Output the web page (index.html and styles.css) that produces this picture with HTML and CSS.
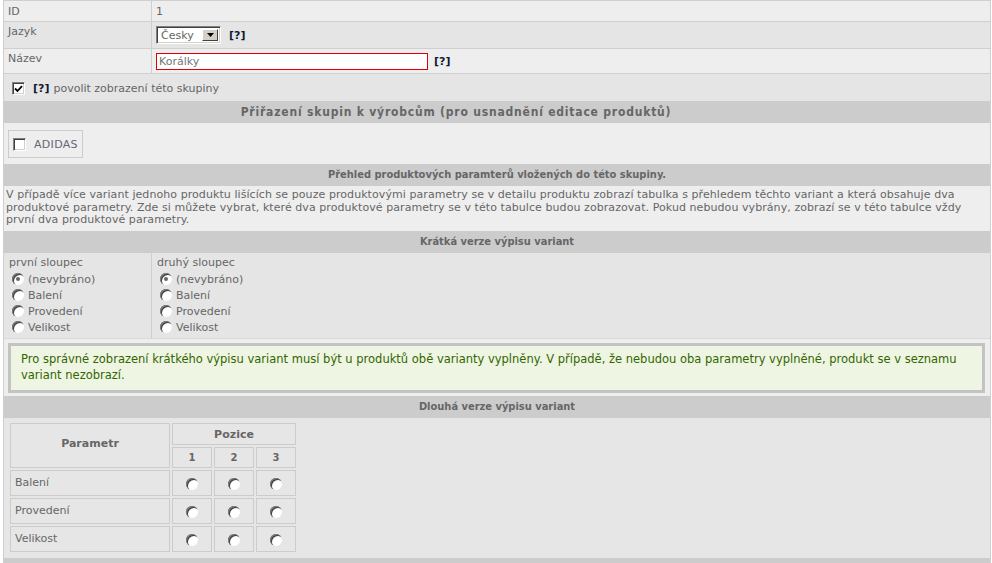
FILE: index.html
```html
<!DOCTYPE html>
<html lang="cs">
<head>
<meta charset="utf-8">
<title>Skupina</title>
<link rel="stylesheet" href="styles.css">
</head>
<body>
<div class="form">
  <div class="row two light r-id">
    <div class="lbl">ID</div>
    <div class="val">1</div>
  </div>
  <div class="row two dark r-sel">
    <div class="lbl">Jazyk</div>
    <div class="val">
      <span class="select"><span class="sel-text">Česky</span><span class="sel-btn"><svg width="7" height="4" viewBox="0 0 7 4"><path d="M0 0h7L3.5 4z" fill="#000"/></svg></span></span>
      <span class="help">[?]</span>
    </div>
  </div>
  <div class="row two light r-inp">
    <div class="lbl">Název</div>
    <div class="val">
      <span class="input">Korálky</span>
      <span class="help">[?]</span>
    </div>
  </div>
  <div class="row dark r-chk">
    <span class="chk"><svg width="9" height="8" viewBox="0 0 9 8"><path d="M1 3.5l2.5 2.5L8 1.2" fill="none" stroke="#000" stroke-width="1.8"/></svg></span>
    <span class="help">[?]</span>
    <span>povolit zobrazení této skupiny</span>
  </div>

  <div class="head head-first">Přiřazení skupin k výrobcům (pro usnadnění editace produktů)</div>
  <div class="row light r-brands">
    <span class="brand"><span class="chk chk-off"></span>ADIDAS</span>
  </div>

  <div class="head">Přehled produktových paramterů vložených do této skupiny.</div>
  <div class="row light r-para">V případě více variant jednoho produktu lišících se pouze produktovými parametry se v detailu produktu zobrazí tabulka s přehledem těchto variant a která obsahuje dva produktové parametry. Zde si můžete vybrat, které dva produktové parametry se v této tabulce budou zobrazovat. Pokud nebudou vybrány, zobrazí se v této tabulce vždy první dva produktové parametry.</div>

  <div class="head">Krátká verze výpisu variant</div>
  <div class="row two dark r-cols">
    <div class="col first">
      <div class="col-title">první sloupec</div>
      <div class="opt"><span class="radio on"></span>(nevybráno)</div>
      <div class="opt"><span class="radio"></span>Balení</div>
      <div class="opt"><span class="radio"></span>Provedení</div>
      <div class="opt"><span class="radio"></span>Velikost</div>
    </div>
    <div class="col">
      <div class="col-title">druhý sloupec</div>
      <div class="opt"><span class="radio on"></span>(nevybráno)</div>
      <div class="opt"><span class="radio"></span>Balení</div>
      <div class="opt"><span class="radio"></span>Provedení</div>
      <div class="opt"><span class="radio"></span>Velikost</div>
    </div>
  </div>
  <div class="row light r-notice">
    <div class="notice">Pro správné zobrazení krátkého výpisu variant musí být u produktů obě varianty vyplněny. V případě, že nebudou oba parametry vyplněné, produkt se v seznamu variant nezobrazí.</div>
  </div>

  <div class="head">Dlouhá verze výpisu variant</div>
  <div class="row mid r-long">
    <table class="pos">
      <tr>
        <th rowspan="2" class="p-name">Parametr</th>
        <th colspan="3" class="p-top">Pozice</th>
      </tr>
      <tr>
        <th class="p-num">1</th><th class="p-num">2</th><th class="p-num">3</th>
      </tr>
      <tr>
        <td class="p-lbl">Balení</td>
        <td class="p-r"><span class="radio"></span></td>
        <td class="p-r"><span class="radio"></span></td>
        <td class="p-r"><span class="radio"></span></td>
      </tr>
      <tr>
        <td class="p-lbl">Provedení</td>
        <td class="p-r"><span class="radio"></span></td>
        <td class="p-r"><span class="radio"></span></td>
        <td class="p-r"><span class="radio"></span></td>
      </tr>
      <tr>
        <td class="p-lbl">Velikost</td>
        <td class="p-r"><span class="radio"></span></td>
        <td class="p-r"><span class="radio"></span></td>
        <td class="p-r"><span class="radio"></span></td>
      </tr>
    </table>
  </div>
  <div class="head">&nbsp;</div>
</div>
</body>
</html>
```

FILE: styles.css
```css
html, body {
  margin: 0;
  padding: 0;
  background: #fff;
}
body {
  font-family: "DejaVu Sans", Verdana, sans-serif;
  font-size: 11px;
  line-height: 13px;
  color: #666;
}
.form {
  margin-left: 3px;
  width: 988px;
  box-sizing: border-box;
  border: 1px solid #cfcfcf;
  border-bottom: 0;
}
.row { box-sizing: border-box; }
.light { background: #eeeeee; }
.dark { background: #e5e5e5; }
.mid { background: #e6e6e6; }

.two {
  display: grid;
  grid-template-columns: 148px 1fr;
}
.lbl {
  border-right: 1px solid #cfcfcf;
  padding: 4px 0 0 4px;
}
.val {
  padding: 4px 0 0 4px;
  display: flex;
  align-items: flex-start;
}

.r-id { height: 21px; border-bottom: 1px solid #cfcfcf; }
.r-id .lbl, .r-id .val { padding-top: 4px; }
.r-sel { height: 27px; border-bottom: 1px solid #cfcfcf; }
.r-sel .lbl { padding-top: 3px; }
.r-inp { height: 25px; border-bottom: 1px solid #cfcfcf; }
.r-inp .lbl { padding-top: 3px; }

.select {
  display: inline-flex;
  width: 65px;
  height: 18px;
  box-sizing: border-box;
  background: #fff;
  border: 1px solid;
  border-color: #808080 #fff #fff #808080;
  box-shadow: inset 1px 1px 0 #404040, inset -1px -1px 0 #d4d0c8;
}
.sel-text {
  flex: 1;
  padding: 2px 0 0 4px;
  color: #666;
}
.sel-btn {
  width: 16px;
  margin: 2px 2px 2px 0;
  background: #d4d0c8;
  box-sizing: border-box;
  border: 1px solid;
  border-color: #fff #404040 #404040 #fff;
  display: flex;
  align-items: center;
  justify-content: center;
}
.help {
  font-weight: bold;
  color: #111a33;
  margin-left: 8px;
  padding-top: 3px;
}
.input {
  width: 272px;
  height: 17px;
  box-sizing: border-box;
  border: 1px solid #e00000;
  background: #fff;
  padding: 1px 2px;
  color: #777;
}
.r-inp .help { margin-left: 6px; padding-top: 2px; }

.r-chk {
  height: 27px;
  padding: 8px 0 0 8px;
  display: flex;
  align-items: flex-start;
}
.r-chk .help { margin-left: 8px; padding-top: 0; margin-right: 4px; }
.chk {
  display: inline-flex;
  align-items: center;
  justify-content: center;
  flex: none;
  width: 13px;
  height: 13px;
  box-sizing: border-box;
  background: #fff;
  border: 1px solid;
  border-color: #808080 #fff #fff #808080;
  box-shadow: inset 1px 1px 0 #404040, inset -1px -1px 0 #d4d0c8;
}

.head {
  background: #cccccc;
  height: 22px;
  text-align: center;
  font-family: "DejaVu Sans Condensed", "DejaVu Sans", sans-serif;
  font-weight: bold;
  color: #666;
  line-height: 22px;
}
.head-first {
  font-size: 12px;
  letter-spacing: 0.8px;
  padding-right: 82px;
}

.r-brands {
  height: 41px;
  padding: 7px 0 0 4px;
}
.brand {
  display: inline-flex;
  align-items: center;
  height: 28px;
  box-sizing: border-box;
  border: 1px solid #cccccc;
  padding: 0 4px 0 4px;
  color: #667;
  letter-spacing: 0.3px;
}
.brand .chk { margin-right: 8px; }

.r-para {
  height: 45px;
  padding: 3px 3px 0 2px;
  line-height: 12.5px;
  letter-spacing: 0.07px;
}

.r-cols { height: 85px; }
.col { padding: 3px 0 0 5px; }
.col.first { border-right: 1px solid #cfcfcf; }
.col-title { margin-bottom: 2px; }
.opt { display: flex; align-items: center; height: 16px; padding-left: 3px; }
.opt .radio { margin-right: 4px; }

.radio {
  display: inline-block;
  width: 12px;
  height: 12px;
  border-radius: 50%;
  background: #fff;
  box-sizing: border-box;
  box-shadow: inset 1px 1px 0 #808080, inset 2px 2px 0 #404040;
  position: relative;
}
.radio.on::after {
  content: "";
  position: absolute;
  left: 4px;
  top: 4px;
  width: 4px;
  height: 4px;
  border-radius: 50%;
  background: #666;
}

.r-notice {
  height: 58px;
  border-top: 1px solid #dadada;
  padding: 4px 5px 0 4px;
}
.notice {
  border: 3px solid #c3c3c3;
  background: #eef5e3;
  color: #336600;
  font-size: 11.5px;
  line-height: 16px;
  padding: 5px 9px 7px 10px;
}

.r-long {
  height: 140px;
  padding: 3px 0 0 4px;
}
.pos {
  border-collapse: separate;
  border-spacing: 2px;
}
.pos th, .pos td {
  border: 1px solid #cccccc;
  box-sizing: border-box;
  color: #666;
  padding: 0;
}
.pos th { font-weight: bold; }
.p-name { width: 160px; height: 45px; text-align: center; vertical-align: middle; padding-bottom: 4px !important; }
.p-top { height: 22px; text-align: center; vertical-align: middle; }
.p-num { width: 40px; height: 21px; text-align: center; vertical-align: middle; font-size: 10px; }
.p-lbl { height: 26px; padding: 5px 4px 0 4px !important; vertical-align: top; }
.p-r { text-align: center; vertical-align: middle; }
.p-r .radio { margin-top: 5px; }
```
